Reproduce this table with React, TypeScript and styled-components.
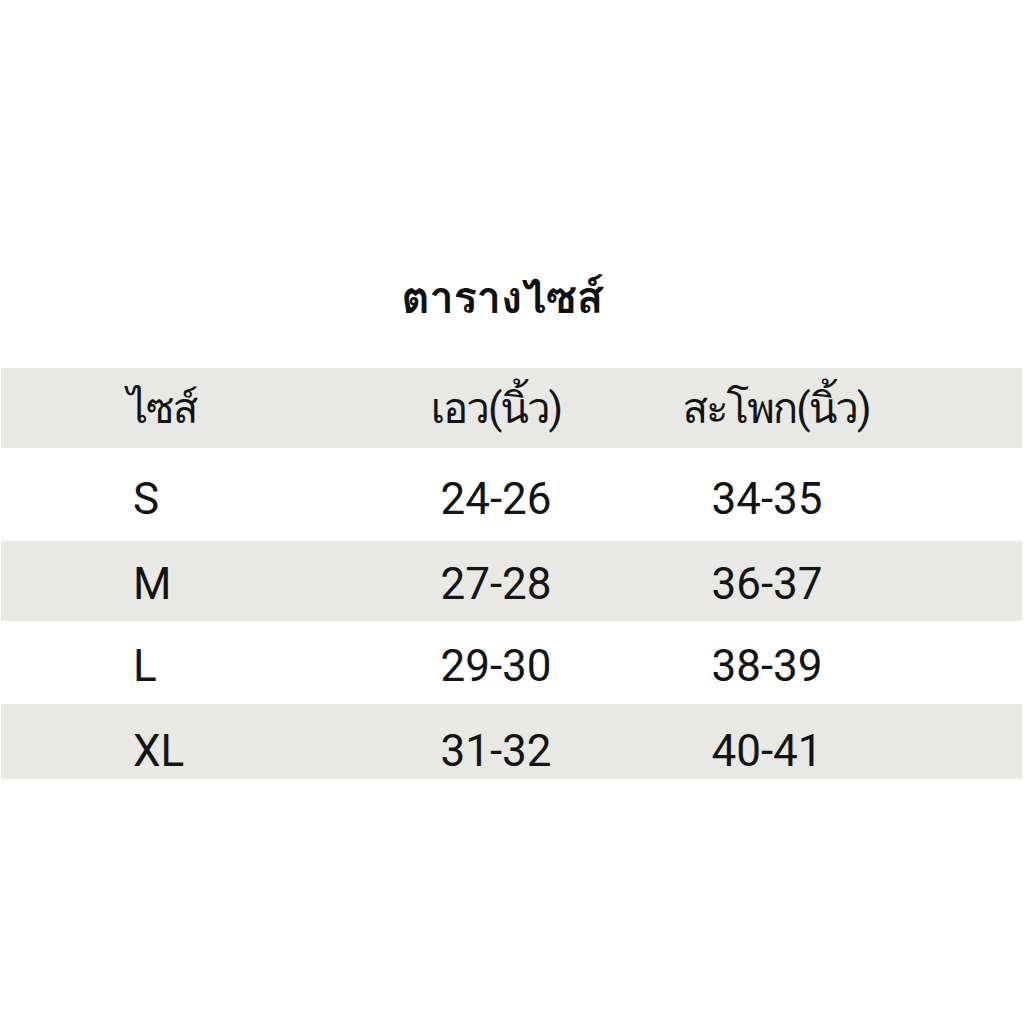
import React from "react";
import styled, { createGlobalStyle } from "styled-components";

const Global = createGlobalStyle`
  html, body { margin: 0; padding: 0; background: #ffffff; }
  body { font-family: Roboto, Loma, "Noto Sans Thai", sans-serif; color: #141414; }
`;

const Page = styled.div`
  width: 1024px;
  height: 1024px;
  background: #ffffff;
  display: flex;
  flex-direction: column;
`;

const TitleArea = styled.div`
  height: 368px;
  display: flex;
  align-items: flex-start;
  justify-content: center;
  box-sizing: border-box;
  padding-top: 266px;
  padding-right: 20px;
`;

const Title = styled.h1`
  margin: 0;
  font-size: 44px;
  font-weight: 700;
  line-height: 64px;
  letter-spacing: -0.5px;
  color: #111111;
`;

const Table = styled.div`
  margin-left: 1px;
  width: 1021px;
  display: flex;
  flex-direction: column;
`;

const Row = styled.div<{ $shaded: boolean; $h: number; $shift: number }>`
  display: grid;
  grid-template-columns: 340px 310px 232px 1fr;
  align-items: center;
  height: ${(p) => p.$h}px;
  background: ${(p) => (p.$shaded ? "#e8e8e4" : "#ffffff")};
  box-sizing: border-box;
  padding-top: ${(p) => p.$shift}px;
`;

const Cell = styled.div`
  text-align: center;
  font-size: 44px;
  font-weight: 400;
  line-height: 50px;
  white-space: nowrap;
`;

const SizeCell = styled(Cell)`
  text-align: left;
  padding-left: 132px;
`;

const HeadCell = styled(Cell)<{ $padL?: number }>`
  font-size: 42px;
  letter-spacing: -2px;
  padding-left: ${(p) => p.$padL ?? 0}px;
`;

const HeadSizeCell = styled(HeadCell)`
  text-align: left;
`;

const rows = [
  { size: "S", waist: "24-26", hip: "34-35", shaded: false, h: 93, shift: 8 },
  { size: "M", waist: "27-28", hip: "36-37", shaded: true, h: 80, shift: 6 },
  { size: "L", waist: "29-30", hip: "38-39", shaded: false, h: 83, shift: 6 },
  { size: "XL", waist: "31-32", hip: "40-41", shaded: true, h: 75, shift: 18 },
];

export default function App() {
  return (
    <Page>
      <Global />
      <TitleArea>
        <Title>ตารางไซส์</Title>
      </TitleArea>
      <Table>
        <Row $shaded={true} $h={80} $shift={2}>
          <HeadSizeCell $padL={126}>ไซส์</HeadSizeCell>
          <HeadCell>เอว(นิ้ว)</HeadCell>
          <HeadCell $padL={18}>สะโพก(นิ้ว)</HeadCell>
          <div />
        </Row>
        {rows.map((r) => (
          <Row key={r.size} $shaded={r.shaded} $h={r.h} $shift={r.shift}>
            <SizeCell>{r.size}</SizeCell>
            <Cell>{r.waist}</Cell>
            <Cell>{r.hip}</Cell>
            <div />
          </Row>
        ))}
      </Table>
    </Page>
  );
}
